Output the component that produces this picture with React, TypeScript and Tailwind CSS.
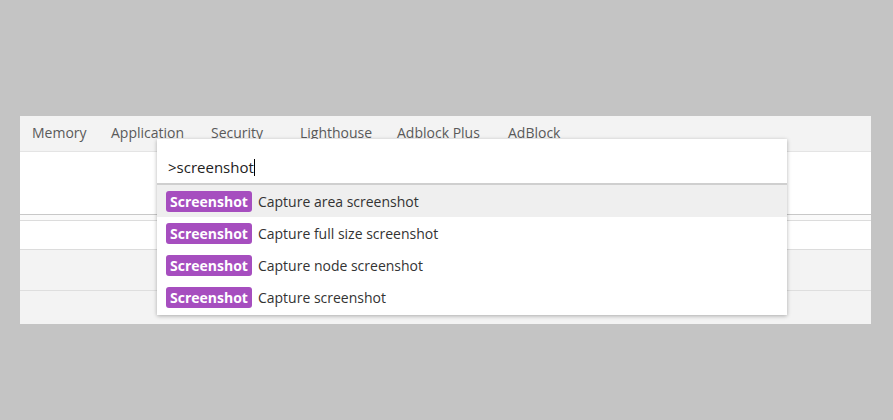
export default function App() {
  const items = [
    "Capture area screenshot",
    "Capture full size screenshot",
    "Capture node screenshot",
    "Capture screenshot",
  ]
  const tabs = [
    { label: "Memory", w: "w-[79px]" },
    { label: "Application", w: "w-[100px]" },
    { label: "Security", w: "w-[89px]" },
    { label: "Lighthouse", w: "w-[97px]" },
    { label: "Adblock Plus", w: "w-[111px]" },
    { label: "AdBlock", w: "w-[80px]" },
  ]

  return (
    <div
      className="w-[893px] h-[420px] bg-[#c4c4c4] pt-[116px] pl-[20px]"
      style={{ fontFamily: '"Open Sans", "Noto Sans", sans-serif' }}
    >
      <div className="relative w-[851px] h-[208px] flex flex-col">
        {/* Tab bar */}
        <div className="h-[36px] bg-[#f3f3f3] border-b border-[#e4e4e4] flex items-center pl-[12px] pb-[2px] text-[14px] text-[#5a5a5a]">
          {tabs.map((t) => (
            <span key={t.label} className={`${t.w} shrink-0`}>
              {t.label}
            </span>
          ))}
        </div>
        <div className="h-[63px] bg-white border-b border-[#c8c8c8]" />
        <div className="h-[6px] bg-[#fafafa] border-b border-[#dcdcdc]" />
        <div className="h-[29px] bg-white border-b border-[#dcdcdc]" />
        <div className="h-[41px] bg-[#f3f3f3] border-b border-[#dedede]" />
        <div className="flex-1 bg-[#f3f3f3]" />

        {/* Command menu */}
        <div className="absolute left-[137px] top-[23px] w-[630px] h-[176px] bg-white shadow-[0_1px_4px_rgba(0,0,0,0.3)] flex flex-col">
          <div className="h-[46px] border-b-2 border-[#cfcfcf] flex items-center pt-[12px] pl-[11px] text-[15px] text-[#222]">
            <span>&gt;screenshot</span>
            <span className="w-px h-[17px] bg-black" />
          </div>
          {items.map((it, i) => (
            <div
              key={it}
              className={`h-[32px] flex items-center pl-[9px] gap-[6px] ${
                i === 0 ? "bg-[#efefef]" : ""
              }`}
            >
              <span className="h-[21px] px-[4px] rounded-[3px] bg-[#a64ebf] text-white font-bold text-[14px] leading-[21px]">
                Screenshot
              </span>
              <span className="text-[14px] text-[#333]">{it}</span>
            </div>
          ))}
        </div>
      </div>
    </div>
  )
}
